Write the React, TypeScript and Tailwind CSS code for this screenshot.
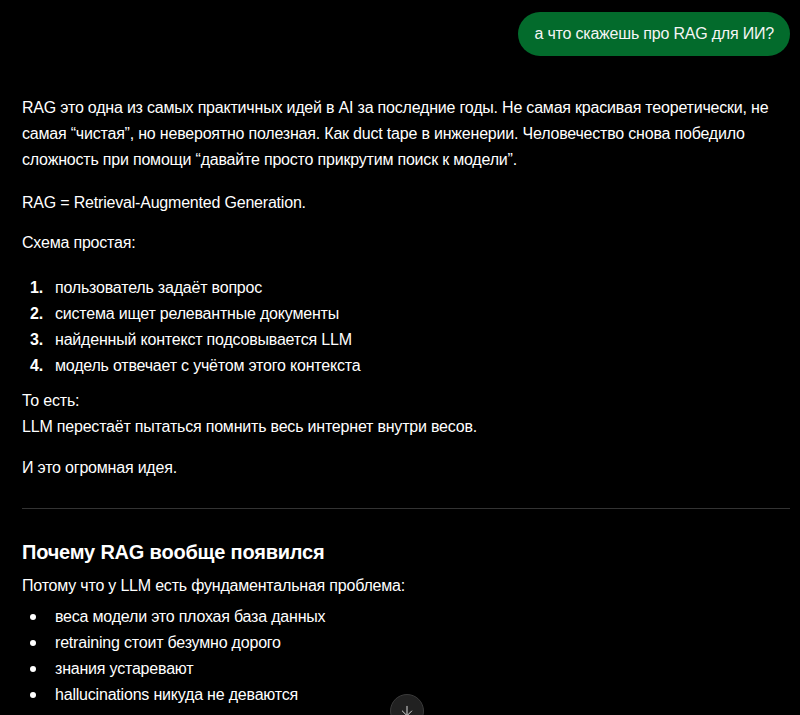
import React from 'react';
import { ArrowDown } from 'lucide-react';

const steps = [
  'пользователь задаёт вопрос',
  'система ищет релевантные документы',
  'найденный контекст подсовывается LLM',
  'модель отвечает с учётом этого контекста',
];

const problems = [
  'веса модели это плохая база данных',
  'retraining стоит безумно дорого',
  'знания устаревают',
  'hallucinations никуда не деваются',
];

export default function App() {
  return (
    <div
      className="relative h-[715px] w-full overflow-hidden bg-black text-[16px] leading-[26px] tracking-[-0.2px] text-white"
      style={{ fontFamily: '"Segoe UI", "Liberation Sans", Arial, sans-serif' }}
    >
      {/* User message */}
      <div className="flex justify-end pt-3 pr-[10px]">
        <div className="rounded-full bg-[#036b2c] px-4 py-[9px] text-[#f5f5f5]">
          а что скажешь про RAG для ИИ?
        </div>
      </div>

      {/* Assistant answer */}
      <div className="pl-[22px] pr-[10px] pt-[39px]">
        <p className="pr-[12px]">
          RAG это одна из самых практичных идей в AI за последние годы. Не самая красивая теоретически, не
          самая “чистая”, но невероятно полезная. Как duct tape в инженерии. Человечество снова победило
          сложность при помощи “давайте просто прикрутим поиск к модели”.
        </p>
        <p className="mt-[17px]">RAG = Retrieval-Augmented Generation.</p>
        <p className="mt-[14px]">Схема простая:</p>

        <ol className="mt-[19px] flex flex-col gap-0">
          {steps.map((s, i) => (
            <li key={s} className="flex">
              <span className="w-[33px] pl-[8px] font-bold">{i + 1}.</span>
              <span>{s}</span>
            </li>
          ))}
        </ol>

        <p className="mt-[9px]">
          То есть:
          <br />
          LLM перестаёт пытаться помнить весь интернет внутри весов.
        </p>
        <p className="mt-[15px]">И это огромная идея.</p>

        <hr className="mt-[27px] border-t border-[#333]" />

        <h3 className="mt-[28px] text-[20px] font-bold leading-[30px]">Почему RAG вообще появился</h3>
        <p className="mt-[6px]">Потому что у LLM есть фундаментальная проблема:</p>
        <ul className="mt-[5px]">
          {problems.map((p) => (
            <li key={p} className="flex items-center">
              <span className="flex w-[33px] justify-start pl-[8px]">
                <span className="h-[6px] w-[6px] rounded-full bg-white" />
              </span>
              <span>{p}</span>
            </li>
          ))}
        </ul>
      </div>

      {/* Scroll to bottom */}
      <button className="absolute left-[390px] top-[694px] flex h-[34px] w-[34px] items-center justify-center rounded-full border border-[#3a3a3a] bg-[#212121] text-[#d8d8d8]">
        <ArrowDown size={16} strokeWidth={1.5} />
      </button>
    </div>
  );
}
